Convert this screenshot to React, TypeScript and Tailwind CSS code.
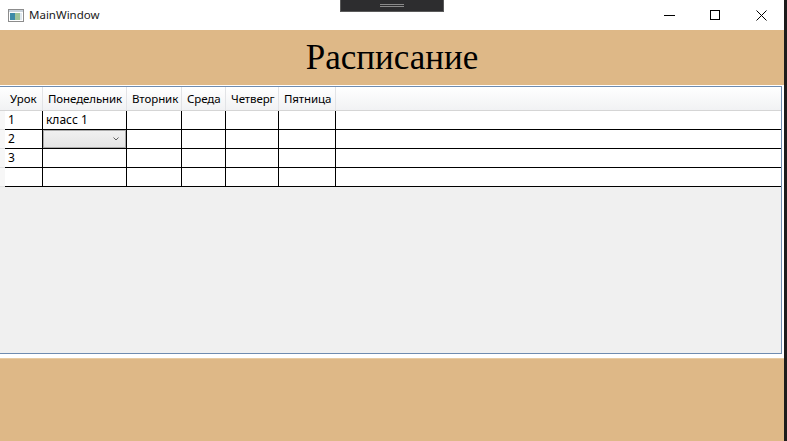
import React from "react";

const cols = [
  { w: "w-[38px]", label: "Урок" },
  { w: "w-[84px]", label: "Понедельник" },
  { w: "w-[55px]", label: "Вторник" },
  { w: "w-[44px]", label: "Среда" },
  { w: "w-[53px]", label: "Четверг" },
  { w: "w-[57px]", label: "Пятница" },
];

function Row({ first, second }: { first?: string; second?: React.ReactNode }) {
  return (
    <div className="flex h-[19px]">
      <div className="w-[5px] shrink-0 border-b border-[#e2e2e2] bg-[#f7f7f7]" />
      <div className="flex flex-1 border-b border-black bg-white">
        {cols.map((c, i) => (
          <div key={i} className={`${c.w} shrink-0 border-r border-black relative`}>
            {i === 0 && first ? <span className="absolute left-[3px] top-[1px] leading-[16px]">{first}</span> : null}
            {i === 1 && second ? second : null}
          </div>
        ))}
        <div className="flex-1" />
      </div>
    </div>
  );
}

export default function App() {
  return (
    <div className="flex w-[787px] h-[441px] overflow-hidden bg-white text-[12px] text-black" style={{ fontFamily: '"Noto Sans", sans-serif' }}>
      <div className="relative flex w-[784px] flex-col">
        {/* title bar */}
        <div className="flex h-[30px] items-center bg-white">
          <svg className="ml-[8px]" width="16" height="13" viewBox="0 0 16 13">
            <rect x="0.5" y="0.5" width="15" height="12" fill="#fff" stroke="#8c8c8c" />
            <rect x="1" y="1" width="14" height="2" fill="#c9d3dc" />
            <rect x="2" y="4" width="5" height="7" fill="#3c8aa8" />
            <rect x="7" y="4" width="5" height="7" fill="#9fc39a" />
            <rect x="12" y="4" width="2" height="7" fill="#dfe8ef" />
          </svg>
          <span className="ml-[5px] text-[11.5px] leading-none text-[#1a1a1a]">MainWindow</span>
          <div className="ml-auto flex h-full items-center">
            <div className="flex h-full w-[46px] items-center justify-center">
              <div className="h-px w-[11px] bg-black" />
            </div>
            <div className="flex h-full w-[46px] items-center justify-center">
              <div className="h-[10px] w-[10px] border border-black" />
            </div>
            <div className="flex h-full w-[46px] items-center justify-center">
              <svg width="11" height="11" viewBox="0 0 11 11">
                <path d="M0.5 0.5L10.5 10.5M10.5 0.5L0.5 10.5" stroke="#000" strokeWidth="1" />
              </svg>
            </div>
          </div>
        </div>
        <div className="absolute left-[340px] top-0 flex h-[12px] w-[104px] flex-col items-center justify-center gap-[1px] border border-t-0 border-[#5a5a5a] bg-[#2d2d2f]">
          <div className="h-px w-[24px] bg-[#8a8a8a]" />
          <div className="h-px w-[24px] bg-[#8a8a8a]" />
        </div>

        {/* header */}
        <div className="flex h-[55px] items-center justify-center bg-[#deb887]">
          <span className="text-[35px] leading-none" style={{ fontFamily: '"Liberation Serif", serif' }}>Расписание</span>
        </div>
        <div className="h-px bg-white" />

        {/* grid */}
        <div className="mr-[2px] flex h-[268px] flex-col border border-l-0 border-[#6f8cb0] bg-[#f0f0f0]">
          <div className="flex h-[24px] border-b border-[#d5d5d5] bg-gradient-to-b from-white to-[#f1f2f4]">
            <div className="w-[5px] shrink-0" />
            {cols.map((c, i) => (
              <div key={i} className={`${c.w} shrink-0 border-r border-[#e2e3e6] flex items-center pl-[5px] whitespace-nowrap text-[11.5px] tracking-[-0.1px]`}>
                {c.label}
              </div>
            ))}
          </div>
          <Row first="1" second={<span className="absolute left-[3px] top-[1px] leading-[16px]">класс 1</span>} />
          <Row
            first="2"
            second={
              <div className="absolute left-0 top-0 h-[18px] w-[83px] border border-[#acacac] bg-gradient-to-b from-[#f0f0f0] to-[#e5e5e5]">
                <svg className="absolute right-[6px] top-[6px]" width="6" height="4" viewBox="0 0 6 4">
                  <path d="M0.5 0.5L3 3L5.5 0.5" stroke="#606060" fill="none" strokeWidth="1" />
                </svg>
              </div>
            }
          />
          <Row first="3" />
          <Row />
          <div className="flex-1" />
        </div>

        <div className="h-[4px] bg-white" />
        <div className="flex-1 border-t border-[#e8cca4] bg-[#deb887]" />
      </div>
      <div className="flex-1 bg-[#1c1c1c]" />
    </div>
  );
}
